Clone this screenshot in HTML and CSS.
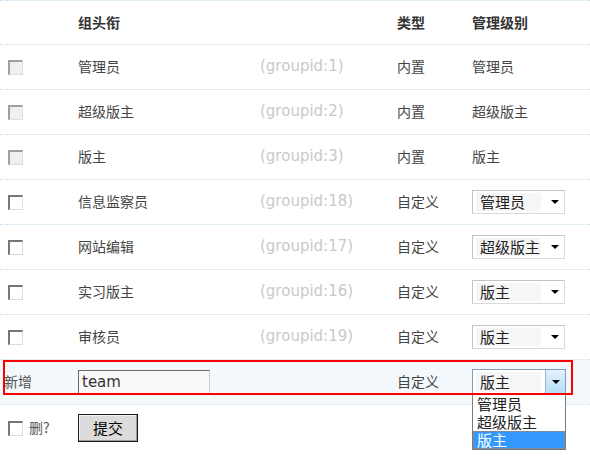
FILE: index.html
```html
<!DOCTYPE html>
<html lang="zh-CN">
<head>
<meta charset="utf-8">
<title>用户组</title>
<link rel="stylesheet" href="styles.css">
</head>
<body>
<div class="table">
  <div class="row head">
    <div class="cell"></div>
    <div class="cell">组头衔</div>
    <div class="cell"></div>
    <div class="cell">类型</div>
    <div class="cell">管理级别</div>
  </div>

  <div class="row">
    <div class="cell"><span class="cb disabled"></span></div>
    <div class="cell">管理员</div>
    <div class="cell gid">(groupid:1)</div>
    <div class="cell">内置</div>
    <div class="cell">管理员</div>
  </div>
  <div class="row">
    <div class="cell"><span class="cb disabled"></span></div>
    <div class="cell">超级版主</div>
    <div class="cell gid">(groupid:2)</div>
    <div class="cell">内置</div>
    <div class="cell">超级版主</div>
  </div>
  <div class="row">
    <div class="cell"><span class="cb disabled"></span></div>
    <div class="cell">版主</div>
    <div class="cell gid">(groupid:3)</div>
    <div class="cell">内置</div>
    <div class="cell">版主</div>
  </div>
  <div class="row">
    <div class="cell"><span class="cb"></span></div>
    <div class="cell">信息监察员</div>
    <div class="cell gid">(groupid:18)</div>
    <div class="cell">自定义</div>
    <div class="cell"><div class="sel"><span class="val">管理员</span><span class="arr"><i class="tri"></i></span></div></div>
  </div>
  <div class="row">
    <div class="cell"><span class="cb"></span></div>
    <div class="cell">网站编辑</div>
    <div class="cell gid">(groupid:17)</div>
    <div class="cell">自定义</div>
    <div class="cell"><div class="sel"><span class="val">超级版主</span><span class="arr"><i class="tri"></i></span></div></div>
  </div>
  <div class="row">
    <div class="cell"><span class="cb"></span></div>
    <div class="cell">实习版主</div>
    <div class="cell gid">(groupid:16)</div>
    <div class="cell">自定义</div>
    <div class="cell"><div class="sel"><span class="val">版主</span><span class="arr"><i class="tri"></i></span></div></div>
  </div>
  <div class="row">
    <div class="cell"><span class="cb"></span></div>
    <div class="cell">审核员</div>
    <div class="cell gid">(groupid:19)</div>
    <div class="cell">自定义</div>
    <div class="cell"><div class="sel"><span class="val">版主</span><span class="arr"><i class="tri"></i></span></div></div>
  </div>

  <div class="row newrow">
    <div class="cell first">新增</div>
    <div class="cell span2"><span class="input">team</span></div>
    <div class="cell">自定义</div>
    <div class="cell">
      <div class="sel open">
        <span class="val">版主</span><span class="arr btn"><i class="tri"></i></span>
        <div class="list">
          <div class="opt">管理员</div>
          <div class="opt">超级版主</div>
          <div class="opt on">版主</div>
        </div>
      </div>
    </div>
    <div class="mark"></div>
  </div>

  <div class="row foot">
    <div class="cell"><span class="cb"></span><span class="del">删?</span></div>
    <div class="cell"><span class="submit">提交</span></div>
  </div>
</div>
</body>
</html>
```

FILE: styles.css
```css
html, body {
  margin: 0;
  padding: 0;
  background: #fff;
}
body {
  font-family: "Noto Sans CJK SC", "DejaVu Sans", sans-serif;
  font-size: 14px;
  color: #444;
  width: 590px;
  height: 458px;
  overflow: hidden;
}
.table {
  width: 590px;
}
.row {
  display: grid;
  grid-template-columns: 78px 182px 137px 75px 118px;
  align-items: center;
  height: 44px;
  border-top: 1px dotted #c2dcee;
  position: relative;
}
.head {
  height: 43px;
  font-weight: bold;
  color: #333;
}
.cell {
  display: flex;
  align-items: center;
  white-space: nowrap;
  line-height: 18px;
  padding-bottom: 2px;
}
.gid {
  font-family: "DejaVu Sans", sans-serif;
  font-size: 15px;
  color: #c9c9c9;
}
.cb {
  display: inline-block;
  box-sizing: border-box;
  width: 15px;
  height: 15px;
  margin-left: 8px;
  margin-top: 2px;
  background: #fff;
  border-style: solid;
  border-width: 2px 1px 1px 2px;
  border-color: #767676 #dcdcdc #dcdcdc #767676;
}
.cb.disabled {
  background: #f0f0f0;
  border-color: #a0a0a0 #dedede #dedede #a0a0a0;
}
.sel {
  position: relative;
  box-sizing: border-box;
  width: 93px;
  height: 24px;
  margin-top: 2px;
  border: 1px solid #c4c4c4;
  border-right-color: #dadada;
  border-bottom-color: #dadada;
  display: flex;
  align-items: stretch;
  padding: 2px 0 2px 3px;
  background: #fff;
  font-size: 15px;
  color: #222;
}
.val {
  width: 61px;
  background: #f6f6f6;
  padding-left: 4px;
  line-height: 18px;
  display: flex;
  align-items: center;
}
.arr {
  flex: 1;
  display: flex;
  align-items: center;
  justify-content: center;
  padding-left: 4px;
}
.tri {
  display: block;
  width: 0;
  height: 0;
  border-left: 4px solid transparent;
  border-right: 4px solid transparent;
  border-top: 4px solid #000;
}
.newrow {
  background: #f2f8fb;
  border-top-color: #d2e4f0;
  border-bottom: 1px dotted #d2e4f0;
}
.first {
  padding-left: 4px;
  color: #555;
}
.span2 {
  grid-column: span 2;
}
.input {
  box-sizing: border-box;
  width: 132px;
  height: 24px;
  margin-top: 2px;
  background: #f9f9f9;
  border-style: solid;
  border-width: 1px;
  border-color: #6a6a6a #cdcdcd #cdcdcd #6a6a6a;
  font-family: "DejaVu Sans", sans-serif;
  font-size: 15px;
  color: #333;
  padding-left: 3px;
  line-height: 22px;
}
.sel.open {
  width: 94px;
  height: 26px;
  border-color: #7f9db9;
  padding: 2px 0 2px 3px;
}
.btn {
  flex: 0 0 20px;
  padding-left: 0;
  margin: -2px 0 -2px 4px;
  box-sizing: border-box;
  border-left: 1px solid #9ab6d0;
  background: linear-gradient(#e2f1fe, #b5dbf7);
}
.list {
  position: absolute;
  left: -1px;
  top: 24px;
  box-sizing: border-box;
  width: 94px;
  border: 1px solid #7a7a7a;
  background: #fff;
  font-size: 15px;
  color: #222;
}
.opt {
  height: 18px;
  line-height: 18px;
  padding-left: 4px;
}
.opt.on {
  background: #3399ff;
  color: #fff;
  outline: 1px dotted #c4803a;
  outline-offset: -1px;
}
.mark {
  position: absolute;
  left: 3px;
  top: 0;
  width: 570px;
  height: 35px;
  box-sizing: border-box;
  border: 2px solid #ff0000;
  pointer-events: none;
}
.foot {
  border-top: none;
  height: 54px;
  align-items: start;
  padding-top: 7px;
  box-sizing: border-box;
}
.foot .cell {
  height: 30px;
}
.del {
  margin-left: 6px;
  color: #555;
}
.submit {
  box-sizing: border-box;
  width: 60px;
  height: 28px;
  margin-top: 2px;
  border: 1px solid #1a1a1a;
  background: #dcdcdc;
  color: #000;
  font-size: 15px;
  display: flex;
  align-items: center;
  justify-content: center;
  box-shadow: inset -1px -1px 0 #9a9a9a, inset 1px 1px 0 #f4f4f4;
}
```
